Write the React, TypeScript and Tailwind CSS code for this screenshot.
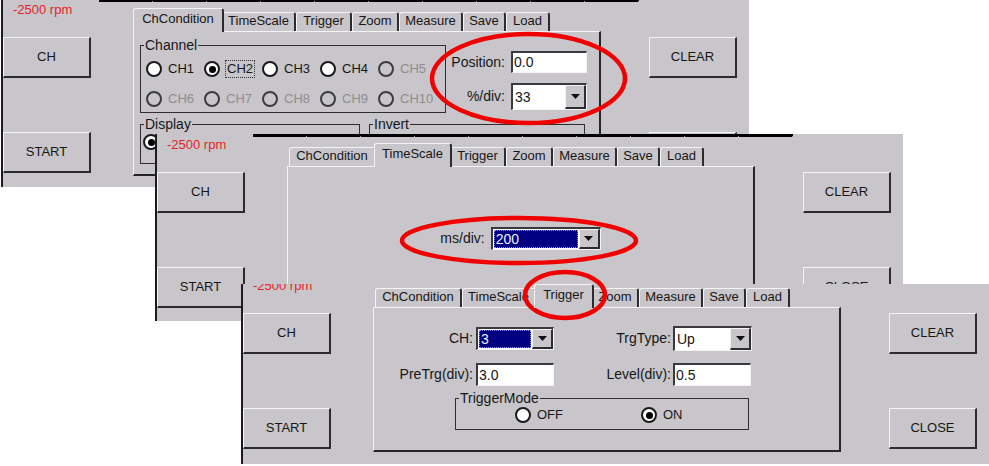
import clsx from "clsx";
import type { ReactNode } from "react";

const TABS = [
  { label: "ChCondition", w: "w-[87px]", ws: "w-[91px]" },
  { label: "TimeScale", w: "w-[74px]", ws: "w-[78px]" },
  { label: "Trigger", w: "w-[56px]", ws: "w-[60px]" },
  { label: "Zoom", w: "w-[47px]", ws: "w-[51px]" },
  { label: "Measure", w: "w-[64px]", ws: "w-[68px]" },
  { label: "Save", w: "w-[43px]", ws: "w-[47px]" },
  { label: "Load", w: "w-[44px]", ws: "w-[48px]" },
];

function RaisedButton({ label }: { label: string }) {
  return (
    <div className="flex h-[41px] w-[88px] items-center justify-center border-t border-l border-r-2 border-b-2 border-t-[#f4f4f4] border-l-[#f4f4f4] border-r-[#2c2c2c] border-b-[#2c2c2c] text-[13px] text-[#161616]">
      {label}
    </div>
  );
}

function Radio({
  checked = false,
  disabled = false,
}: {
  checked?: boolean;
  disabled?: boolean;
}) {
  return (
    <span
      className={clsx(
        "flex h-[16px] w-[16px] shrink-0 items-center justify-center rounded-full border-2",
        disabled ? "border-[#3c3c3c]" : "border-[#1a1a1a] bg-white",
      )}
    >
      {checked ? <span className="h-[7px] w-[7px] rounded-full bg-black" /> : null}
    </span>
  );
}

function RadioItem({
  label,
  checked,
  disabled,
  focused,
  className,
}: {
  label: string;
  checked?: boolean;
  disabled?: boolean;
  focused?: boolean;
  className?: string;
}) {
  return (
    <div className={clsx("flex items-center gap-[6px]", className)}>
      <Radio checked={checked} disabled={disabled} />
      <span
        className={clsx(
          "text-[13px] leading-[16px]",
          disabled ? "text-[#8e8c90]" : "text-[#161616]",
          focused && "-ml-px border border-dotted border-[#333] px-px leading-[14px]",
        )}
      >
        {label}
      </span>
    </div>
  );
}

function Field({ value, className }: { value: string; className?: string }) {
  return (
    <div
      className={clsx(
        "flex items-center border-t-2 border-l-2 border-r border-b border-t-[#3a3a3a] border-l-[#3a3a3a] border-r-[#f4f4f4] border-b-[#f4f4f4] bg-white pl-px text-[14px] text-[#161616]",
        className,
      )}
    >
      {value}
    </div>
  );
}

function Combo({
  value,
  selected,
  className,
}: {
  value: string;
  selected?: boolean;
  className?: string;
}) {
  return (
    <div
      className={clsx(
        "flex items-stretch border-t-2 border-l-2 border-r border-b border-t-[#3a3a3a] border-l-[#3a3a3a] border-r-[#f4f4f4] border-b-[#f4f4f4] bg-white text-[14px]",
        className,
      )}
    >
      <div className="flex flex-1 items-stretch p-px">
        {selected ? (
          <span className="flex flex-1 items-center border border-dotted border-[#8a8aff] bg-[#000080] pl-px text-[#eef0ff]">
            {value}
          </span>
        ) : (
          <span className="flex items-center pl-px text-[#161616]">{value}</span>
        )}
      </div>
      <div className="flex w-[21px] items-center justify-center border-t border-l border-r-2 border-b-2 border-t-[#f4f4f4] border-l-[#f4f4f4] border-r-[#2c2c2c] border-b-[#2c2c2c] bg-[#c8c6ca]">
        <svg width="9" height="5" viewBox="0 0 9 5">
          <polygon points="0,0 9,0 4.5,5" fill="#111" />
        </svg>
      </div>
    </div>
  );
}

function Group({
  label,
  className,
  children,
}: {
  label: string;
  className?: string;
  children?: ReactNode;
}) {
  return (
    <fieldset className={clsx("border border-[#2e2e2e]", className)}>
      <legend className="ml-[3px] px-px text-[14px] leading-[14px] text-[#161616]">
        {label}
      </legend>
      {children}
    </fieldset>
  );
}

function TabStrip({ active }: { active: string }) {
  return (
    <div className="flex h-[23px] items-end pl-[2px]">
      {TABS.map((tab) => {
        const on = tab.label === active;
        return (
          <div
            key={tab.label}
            className={clsx(
              "flex shrink-0 items-center justify-center rounded-t-[3px] border-t border-l border-r-2 border-t-[#f4f4f4] border-l-[#f4f4f4] border-r-[#2c2c2c] bg-[#c8c6ca] text-[13px] text-[#161616]",
              on ? "relative z-10 -mx-[2px] -mb-px h-[24px] pb-[4px]" : "h-[19px] pb-[3px]",
              on ? tab.ws : tab.w,
            )}
          >
            {tab.label}
          </div>
        );
      })}
    </div>
  );
}

function TopBar() {
  return (
    <div className="ml-[96px] flex h-[3px] w-[540px] bg-black">
      {Array.from({ length: 10 }, (_, i) => (
        <div key={i} className="flex flex-1 items-end justify-end">
          <div className="h-px w-px bg-[#9a9a9a]" />
        </div>
      ))}
    </div>
  );
}

function Window({
  className,
  shift,
  tab,
  bar,
  children,
}: {
  className: string;
  shift?: string;
  tab: string;
  bar?: boolean;
  children: ReactNode;
}) {
  return (
    <div
      className={clsx(
        "absolute w-[748px] overflow-hidden border-l-2 border-l-[#1c1c1c] bg-[#c8c6ca]",
        className,
      )}
    >
      <div className={clsx("flex flex-col", shift)}>
        <div className="h-[4px]">{bar ? <TopBar /> : null}</div>
        <div className="flex">
          <div className="flex w-[88px] flex-col">
            <span className="pl-[10px] text-[13px] leading-[13px] text-[#e61e28]">
              -2500 rpm
            </span>
            <div className="mt-[21px]">
              <RaisedButton label="CH" />
            </div>
            <div className="mt-[54px]">
              <RaisedButton label="START" />
            </div>
          </div>
          <div className="ml-[42px] mt-[5px] flex flex-col">
            <TabStrip active={tab} />
            <div className="h-[145px] w-[468px] border-t border-l border-r-2 border-b-2 border-t-[#f4f4f4] border-l-[#f4f4f4] border-r-[#262626] border-b-[#262626]">
              {children}
            </div>
          </div>
          <div className="ml-[48px] mt-[34px] flex flex-col gap-[54px]">
            <RaisedButton label="CLEAR" />
            <RaisedButton label="CLOSE" />
          </div>
        </div>
      </div>
    </div>
  );
}

function ChConditionBody() {
  const rows = [
    [
      { label: "CH1" },
      { label: "CH2", checked: true, focused: true },
      { label: "CH3" },
      { label: "CH4" },
      { label: "CH5", disabled: true },
    ],
    [
      { label: "CH6", disabled: true },
      { label: "CH7", disabled: true },
      { label: "CH8", disabled: true },
      { label: "CH9", disabled: true },
      { label: "CH10", disabled: true },
    ],
  ];

  return (
    <div className="flex flex-col">
      <div className="flex">
        <Group label="Channel" className="ml-[6px] mt-[6px] h-[75px] w-[306px]">
          <div className="flex flex-col gap-[13px] pl-[5px] pt-[8px]">
            {rows.map((row, i) => (
              <div key={i} className="flex">
                {row.map((item) => (
                  <RadioItem key={item.label} className="w-[58px]" {...item} />
                ))}
              </div>
            ))}
          </div>
        </Group>
        <div className="ml-[3px] mt-[19px] flex flex-col gap-[10px] text-[14px] text-[#161616]">
          <div className="flex items-center">
            <span className="w-[56px] text-right">Position:</span>
            <Field value="0.0" className="ml-[6px] h-[22px] w-[76px]" />
          </div>
          <div className="flex items-center">
            <span className="w-[56px] text-right">%/div:</span>
            <Combo value="33" className="ml-[6px] h-[27px] w-[76px]" />
          </div>
        </div>
      </div>
      <div className="mt-[4px] flex">
        <Group label="Display" className="ml-[6px] h-[47px] w-[220px]">
          <div className="pl-[2px] pt-[3px]">
            <Radio checked />
          </div>
        </Group>
        <Group label="Invert" className="ml-[9px] h-[47px] w-[216px]" />
      </div>
    </div>
  );
}

function TimeScaleBody() {
  return (
    <div className="flex items-center justify-center pt-[60px] text-[14px] text-[#161616]">
      <span>ms/div:</span>
      <Combo selected value="200" className="ml-[6px] h-[23px] w-[110px]" />
    </div>
  );
}

function TriggerBody() {
  return (
    <div className="flex flex-col pt-[18px] text-[14px] text-[#161616]">
      <div className="flex items-center">
        <span className="w-[99px] text-right">CH:</span>
        <Combo selected value="3" className="ml-[3px] h-[23px] w-[78px]" />
        <span className="w-[117px] text-right">TrgType:</span>
        <Combo value="Up" className="ml-[2px] h-[25px] w-[79px]" />
      </div>
      <div className="mt-[12px] flex items-center">
        <span className="w-[99px] text-right">PreTrg(div):</span>
        <Field value="3.0" className="ml-[3px] h-[23px] w-[78px]" />
        <span className="w-[117px] text-right">Level(div):</span>
        <Field value="0.5" className="ml-[2px] h-[23px] w-[78px]" />
      </div>
      <Group label="TriggerMode" className="ml-[81px] mt-[5px] h-[39px] w-[294px]">
        <div className="flex pl-[59px] pt-[2px]">
          <RadioItem label="OFF" className="w-[126px]" />
          <RadioItem label="ON" checked />
        </div>
      </Group>
    </div>
  );
}

export default function App() {
  return (
    <div className="relative h-[466px] w-[989px] overflow-hidden bg-white font-['Liberation_Sans',Arial,sans-serif]">
      <Window className="left-[1px] top-[-1px] h-[188px]" tab="ChCondition" bar>
        <ChConditionBody />
      </Window>
      <Window className="left-[155px] top-[134px] h-[187px]" tab="TimeScale" bar>
        <TimeScaleBody />
      </Window>
      <Window className="left-[241px] top-[284px] h-[180px]" shift="-mt-[9px]" tab="Trigger">
        <TriggerBody />
      </Window>

      <svg
        className="pointer-events-none absolute left-0 top-0"
        width="989"
        height="466"
        viewBox="0 0 989 466"
      >
        <ellipse cx="528.5" cy="78.5" rx="96.5" ry="44.5" fill="none" stroke="#f00000" strokeWidth="4.5" />
        <ellipse cx="519" cy="240.5" rx="117" ry="22.5" fill="none" stroke="#f00000" strokeWidth="4.5" />
        <ellipse cx="565" cy="295" rx="40" ry="23" fill="none" stroke="#f00000" strokeWidth="4.5" />
      </svg>
    </div>
  );
}
